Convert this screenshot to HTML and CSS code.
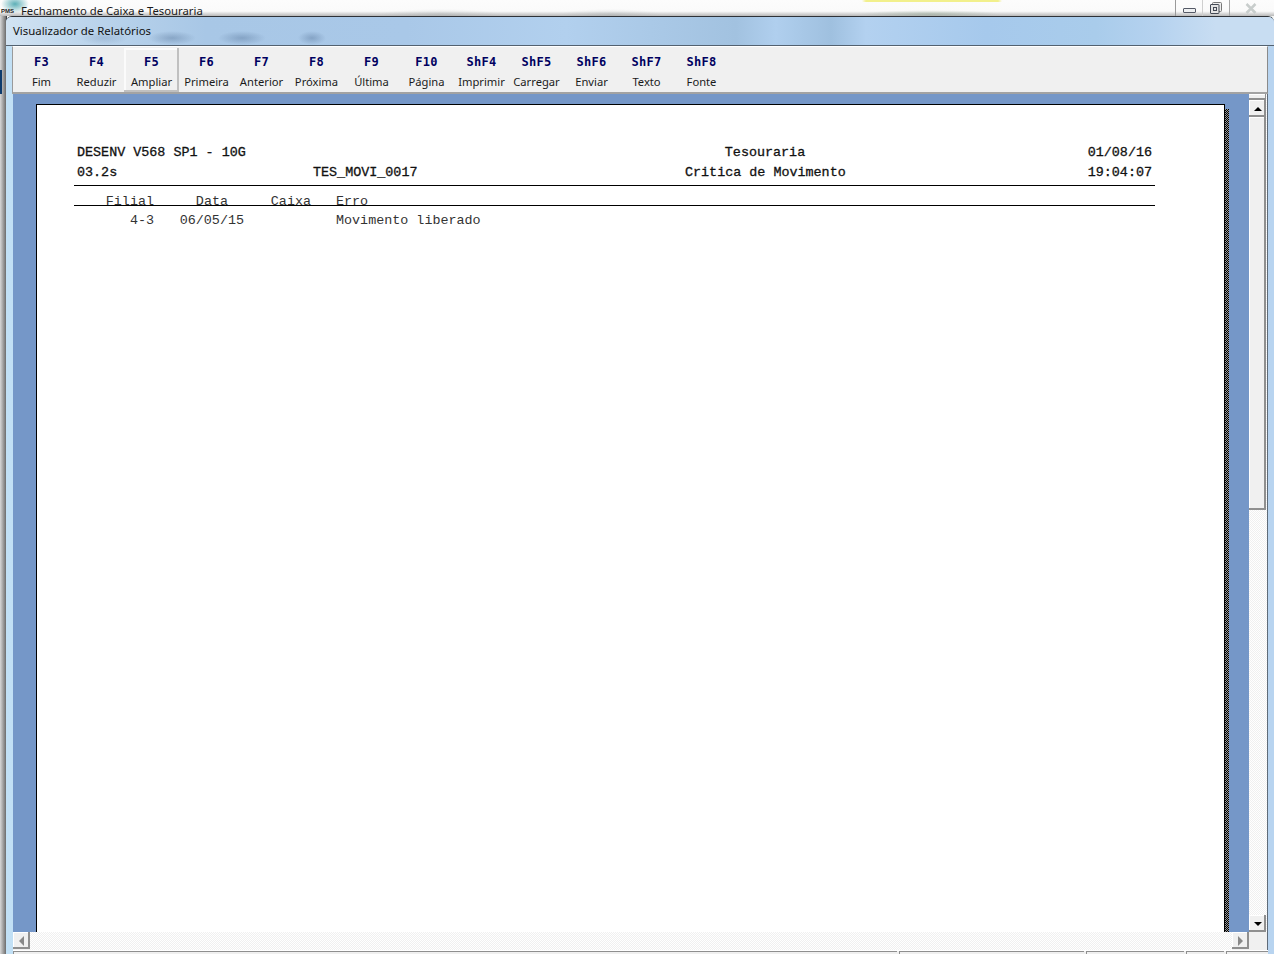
FILE: index.html
```html
<!DOCTYPE html>
<html lang="pt">
<head>
<meta charset="utf-8">
<title>Fechamento de Caixa e Tesouraria</title>
<link rel="stylesheet" href="styles.css">
</head>
<body>
<header class="app-title">
  <span class="app-logo">PMS</span>
  <span class="app-name">Fechamento de Caixa e Tesouraria</span>
  <div class="win-buttons">
    <span class="win-btn"><svg class="icon-min" width="13" height="5" viewBox="0 0 13 5"><rect x=".5" y=".5" width="12" height="4" rx=".5" fill="#eef0f2" stroke="#555a66"/></svg></span>
    <span class="win-btn"><svg width="12" height="12" viewBox="0 0 12 12"><rect x="2.500" y=".5" width="9" height="9" rx="1" fill="#eee" stroke="#777"/><rect x=".5" y="2.500" width="8.500" height="9" rx=".5" fill="#e4e4e4" stroke="#444a55"/><rect x="3.500" y="5.500" width="3" height="3" fill="none" stroke="#444a55"/></svg></span>
    <span class="win-btn last"><svg width="12" height="11" viewBox="0 0 12 11"><path d="M1.500 1l9 9M10.500 1l-9 9" stroke="#c8cdcc" stroke-width="2.500" fill="none"/></svg></span>
  </div>
</header>
<div class="stage">
  <div class="side-strip"></div>
  <main class="window">
    <div class="caption">Visualizador de Relatórios</div>
    <nav class="toolbar">
      <div class="tool"><b>F3</b><span>Fim</span></div>
      <div class="tool"><b>F4</b><span>Reduzir</span></div>
      <div class="tool raised"><b>F5</b><span>Ampliar</span></div>
      <div class="tool"><b>F6</b><span>Primeira</span></div>
      <div class="tool"><b>F7</b><span>Anterior</span></div>
      <div class="tool"><b>F8</b><span>Próxima</span></div>
      <div class="tool"><b>F9</b><span>Última</span></div>
      <div class="tool"><b>F10</b><span>Página</span></div>
      <div class="tool"><b>ShF4</b><span>Imprimir</span></div>
      <div class="tool"><b>ShF5</b><span>Carregar</span></div>
      <div class="tool"><b>ShF6</b><span>Enviar</span></div>
      <div class="tool"><b>ShF7</b><span>Texto</span></div>
      <div class="tool"><b>ShF8</b><span>Fonte</span></div>
    </nav>
    <div class="viewer">
      <div class="view-main">
        <div class="canvas">
          <article class="paper">
            <div class="row strong">
              <span class="c-a">DESENV V568 SP1 - 10G</span>
              <span class="c-b"></span>
              <span class="c-c">Tesouraria</span>
              <span class="c-d">01/08/16</span>
            </div>
            <div class="row strong">
              <span class="c-a">03.2s</span>
              <span class="c-b">TES_MOVI_0017</span>
              <span class="c-c">Critica de Movimento</span>
              <span class="c-d">19:04:07</span>
            </div>
            <div class="rule"></div>
            <div class="cols cols-head">
              <span class="t-filial">Filial</span>
              <span class="t-data">Data</span>
              <span class="t-caixa">Caixa</span>
              <span class="t-erro">Erro</span>
            </div>
            <div class="rule rule-overlap"></div>
            <div class="cols cols-body">
              <span class="t-filial">4-3</span>
              <span class="t-data">06/05/15</span>
              <span class="t-caixa"></span>
              <span class="t-erro">Movimento liberado</span>
            </div>
          </article>
          <div class="paper-shadow"></div>
        </div>
        <div class="vscroll">
          <div class="sb-stub"></div>
          <div class="sb-btn up"><i></i></div>
          <div class="sb-thumb"></div>
          <div class="sb-track"></div>
          <div class="sb-btn down"><i></i></div>
        </div>
      </div>
      <div class="hscroll">
        <div class="sb-btn left"><i></i></div>
        <div class="h-track"></div>
        <div class="sb-btn right"><i></i></div>
        <div class="corner"></div>
      </div>
      <div class="status">
        <span class="st st-1"></span><span class="st st-2"></span><span class="st st-3"></span><span class="st st-4"></span><span class="st st-5"></span>
      </div>
    </div>
  </main>
</div>
</body>
</html>
```
FILE: styles.css
```css
* { box-sizing: border-box; }
html, body { margin: 0; height: 100%; overflow: hidden; }
body {
  width: 1274px; height: 954px;
  display: flex; flex-direction: column;
  background: #f4f6f5;
  font-family: "Noto Sans", "Open Sans", sans-serif;
  color: #111;
}
.app-title {
  height: 16px; flex: none;
  display: flex; align-items: center;
  background:
    linear-gradient(90deg, transparent 862px, #f2f08c 866px, #f2f08c 998px, transparent 1002px) top/100% 2px no-repeat,
    radial-gradient(ellipse 70px 4px at 930px 14px, rgba(110,140,110,.35), transparent),
    radial-gradient(ellipse 60px 5px at 440px 14px, rgba(120,130,130,.2), transparent),
    radial-gradient(ellipse 50px 5px at 610px 14px, rgba(120,130,130,.2), transparent),
    radial-gradient(ellipse 14px 9px at 15px 4px, rgba(40,150,160,.75), transparent),
    linear-gradient(#fcfcfc 0, #fafafa 70%, #b8b8b8 100%);
}
.app-logo {
  width: 20px; flex: none; margin-top: 6px;
  font: 700 6px/8px "Liberation Sans", sans-serif;
  color: #222; text-align: left; padding-left: 1px;
}
.app-name { font-size: 11.300px; line-height: 16px; margin: 6px 0 0 1px; white-space: nowrap; color: #1a1a1a; }
.win-buttons { margin-left: auto; display: flex; height: 16px; }
.win-btn { width: 27px; display: flex; align-items: center; justify-content: center; border-left: 1px solid #9a9a9a; }
.win-btn + .win-btn { border-left-color: #cfcfcf; }
.icon-min { margin-top: 5px; }
.win-btn.last { border-left: 1px solid #a8a8a8; width: 45px; padding-right: 2px; }

.stage { flex: 1; display: flex; min-height: 0; }
.side-strip {
  width: 7px; flex: none;
  background:
    linear-gradient(#0d3c6e, #0d3c6e) 0 54px/2px 24px no-repeat,
    linear-gradient(90deg, #d8d8d8, #8d8d8d 70%, #6c6c6c);
  border-right: 1px solid #3c4048;
}
.window {
  flex: 1; min-width: 0;
  display: flex; flex-direction: column;
  margin-left: -1px;
  border-top: 1px solid #2e3238;
  border-top-left-radius: 6px;
  border-top-right-radius: 6px;
  padding: 0 6px;
  background: linear-gradient(90deg, #c2e0f5 0, #a9cbec 60%, #b8d4f0 100%);
  overflow: hidden;
}
.caption {
  height: 29px; flex: none;
  margin: 0 -6px; padding: 5px 0 0 7px;
  font-size: 11.400px; line-height: 18px; color: #111;
  background:
    radial-gradient(ellipse 24px 7px at 98px 21px, rgba(70,100,140,.2), transparent),
    radial-gradient(ellipse 24px 7px at 166px 21px, rgba(50,80,120,.3), transparent),
    radial-gradient(ellipse 24px 7px at 236px 21px, rgba(50,80,120,.3), transparent),
    radial-gradient(ellipse 14px 7px at 306px 21px, rgba(50,80,120,.3), transparent),
    linear-gradient(90deg, #d2e3f2 0, #bcd5ec 80px, #a8c7e6 200px, #a9c8e8 400px, #b2d0ee 560px, #a2c2e0 730px, #b0cfee 770px, #9fc0df 825px, #b3d1f0 860px, #a6c9ec 980px, #a9cceb 1090px, #b5d2ef 1150px, #c8ddf2 1210px);
  border-bottom: 1px solid #53616f;
}
.toolbar {
  height: 48px; flex: none;
  display: flex;
  padding: 1px 0 0 1px;
  background: #f0f0f0;
  border: 1px solid #fff;
  border-left-color: #9a9a9a;
  border-right-color: #8a8a8a;
  border-bottom: 2px solid #a3a3a3;
}
.tool {
  width: 55px; height: 44px; flex: none;
  display: flex; flex-direction: column; align-items: center;
  padding-top: 6px;
}
.tool.raised { box-shadow: inset -2px -2px 0 #c0c0c0, inset 2px 2px 0 #fbfbfb; }
.tool b {
  font-family: "DejaVu Sans Mono", "Liberation Mono", monospace;
  font-size: 12px; line-height: 16px; font-weight: 700; color: #000060;
  letter-spacing: .3px;
}
.tool span { font-size: 11.200px; line-height: 16px; margin-top: 4px; color: #1a1a1a; white-space: nowrap; }

.viewer { flex: 1; min-height: 0; display: flex; flex-direction: column; background: #7597c8; margin-left: 1px; margin-right: 0; }
.view-main { flex: 1; min-height: 0; display: flex; }
.canvas { flex: 1; min-width: 0; padding: 10px 0 0 23px; display: flex; overflow: hidden; }
.paper {
  width: 1189px; flex: none;
  background: #fff;
  border: 1px solid #000;
  border-bottom: 0;
  padding: 38px 0 0 37px;
  font-family: "Liberation Mono", "Courier New", monospace;
  font-size: 13.400px;
  color: #222;
}
.paper-shadow {
  width: 4px; margin-top: 5px; flex: none;
  background: repeating-conic-gradient(#000 0 25%, #9a9a9a 0 50%) 0 0/2px 2px;
}
.row { display: flex; height: 20px; line-height: 20px; padding-left: 3px; white-space: pre; }
.strong { color: #111; -webkit-text-stroke: .3px #111; }
.c-a { width: 236px; flex: none; }
.c-b { width: 372px; flex: none; }
.c-c { width: 160px; flex: none; text-align: center; }
.c-d { width: 307px; flex: none; text-align: right; }
.rule { height: 1px; background: #000; margin: 2px 0 0; width: 1081px; }
.cols { display: flex; line-height: 18px; white-space: pre; color: #333; }
.cols-head { margin-top: 7px; height: 12px; }
.cols-body { margin-top: 6px; height: 18px; }
.rule-overlap { margin-top: 0; }
.t-filial { width: 80px; flex: none; text-align: right; }
.t-data { width: 74px; flex: none; text-align: right; }
.t-caixa { width: 83px; flex: none; text-align: right; }
.cols-body .t-data { width: 90px; }
.cols-body .t-caixa { width: 67px; }
.t-erro { flex: none; margin-left: 25px; }

.vscroll {
  width: 19px; flex: none;
  display: flex; flex-direction: column;
  background: repeating-conic-gradient(#f0f0f0 0 25%, #fff 0 50%) 0 0/2px 2px;
  border-right: 1px solid #5f6b78;
}
.sb-stub {
  width: 17px; height: 6px; flex: none;
  background: #f0f0f0;
  box-shadow: inset -1px -2px 0 #8f8f8f, inset 0 1px 0 #fff;
}
.sb-track { flex: 1; }
.sb-thumb {
  width: 17px; height: 393px; flex: none;
  background: #f0f0f0;
  box-shadow: inset -2px -2px 0 #8f8f8f, inset 1px 1px 0 #fff;
}
.sb-btn {
  width: 17px; height: 17px; flex: none;
  display: flex; align-items: center; justify-content: center;
  background: #f0f0f0;
  box-shadow: inset -2px -2px 0 #8f8f8f, inset 1px 1px 0 #fff;
}
.sb-btn i { display: block; width: 0; height: 0; border-style: solid; border-color: transparent; }
.up i { border-width: 0 4px 4px; border-bottom-color: #000; }
.down i { border-width: 4px 4px 0; border-top-color: #000; }
.left i { border-width: 5px 5px 5px 0; border-right-color: #888; }
.right i { border-width: 5px 0 5px 5px; border-left-color: #888; }
.hscroll { height: 18px; flex: none; display: flex; background: #f0f0f0; }
.h-track {
  flex: 1;
  background: repeating-conic-gradient(#f0f0f0 0 25%, #fff 0 50%) 0 0/2px 2px;
}
.corner { width: 19px; flex: none; background: #f0f0f0; border-right: 1px solid #5f6b78; }
.status {
  height: 4px; flex: none;
  background: #f0f0f0;
  border-top: 1px solid #fff;
  display: flex; gap: 2px;
}
.st { border-top: 1px solid #8f8f8f; border-left: 1px solid #8f8f8f; }
.st-1 { flex: 1; }
.st-2 { width: 185px; }
.st-3 { width: 98px; }
.st-4 { width: 38px; }
.st-5 { width: 42px; }
```
